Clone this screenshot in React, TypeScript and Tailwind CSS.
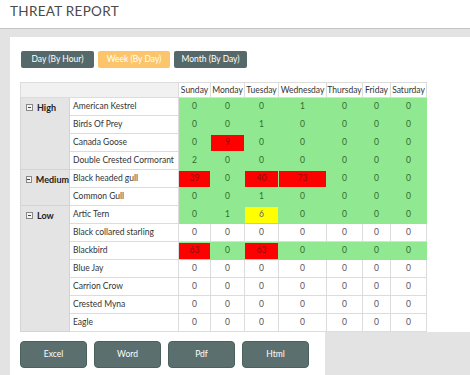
import React from 'react';

type Cell = { v: number; c?: 'g' | 'r' | 'y' | 'w' };

const days = ['Sunday', 'Monday', 'Tuesday', 'Wednesday', 'Thursday', 'Friday', 'Saturday'];

const g = (vals: number[], red: number[] = [], yellow: number[] = []): Cell[] =>
  vals.map((v, i) => ({ v, c: red.includes(i) ? 'r' : yellow.includes(i) ? 'y' : 'g' }));
const w = (vals: number[]): Cell[] => vals.map((v) => ({ v, c: 'w' }));

const groups: { level: string; rows: { bird: string; cells: Cell[] }[] }[] = [
  {
    level: 'High',
    rows: [
      { bird: 'American Kestrel', cells: g([0, 0, 0, 1, 0, 0, 0]) },
      { bird: 'Birds Of Prey', cells: g([0, 0, 1, 0, 0, 0, 0]) },
      { bird: 'Canada Goose', cells: g([0, 9, 0, 0, 0, 0, 0], [1]) },
      { bird: 'Double Crested Cormorant', cells: g([2, 0, 0, 0, 0, 0, 0]) },
    ],
  },
  {
    level: 'Medium',
    rows: [
      { bird: 'Black headed gull', cells: g([39, 0, 40, 73, 0, 0, 0], [0, 2, 3]) },
      { bird: 'Common Gull', cells: g([0, 0, 1, 0, 0, 0, 0]) },
    ],
  },
  {
    level: 'Low',
    rows: [
      { bird: 'Artic Tern', cells: g([0, 1, 6, 0, 0, 0, 0], [], [2]) },
      { bird: 'Black collared starling', cells: w([0, 0, 0, 0, 0, 0, 0]) },
      { bird: 'Blackbird', cells: g([63, 0, 63, 0, 0, 0, 0], [0, 2]) },
      { bird: 'Blue Jay', cells: w([0, 0, 0, 0, 0, 0, 0]) },
      { bird: 'Carrion Crow', cells: w([0, 0, 0, 0, 0, 0, 0]) },
      { bird: 'Crested Myna', cells: w([0, 0, 0, 0, 0, 0, 0]) },
      { bird: 'Eagle', cells: w([0, 0, 0, 0, 0, 0, 0]) },
    ],
  },
];

function ValueCell({ cell }: { cell: Cell }) {
  if (cell.c === 'w') {
    return <td className="border border-[#dcdcdc] bg-white text-center text-[#555]">{cell.v}</td>;
  }
  const inner =
    cell.c === 'r'
      ? 'bg-[#ff0000] text-[#8a1010]'
      : cell.c === 'y'
      ? 'bg-[#ffff00] text-[#666]'
      : 'text-[#2c6e2c]';
  return (
    <td className="border border-[#90e890] bg-[#90e890] p-0 text-center">
      <div className={`flex h-[16px] items-center justify-center ${inner}`}>{cell.v}</div>
    </td>
  );
}

function MinusBox() {
  return (
    <span className="mr-[4px] inline-flex h-[7px] w-[7px] items-center justify-center border border-[#888] bg-[#f4f4f4]">
      <span className="h-px w-[3px] bg-[#444]" />
    </span>
  );
}

export default function App() {
  return (
    <div className="h-[375px] w-[470px] overflow-hidden bg-[#e3e3e3] font-['Lato',sans-serif]">
      <div className="h-[29px] border-b border-[#c4c4c4] bg-white pl-[10px] pt-[3px]">
        <h1 className="text-[13.5px] leading-[16px] tracking-[0.3px] text-[#4a4a4a]">THREAT REPORT</h1>
      </div>
      <div className="ml-[10px] mt-[8px]">
        <div className="bg-white pl-[10px] pt-[14px]">
          <div className="flex gap-[4px] pl-[1px]">
            <button className="h-[17px] w-[73px] rounded-[2px] bg-[#56696a] text-[8.5px] text-white">Day (By Hour)</button>
            <button className="h-[17px] w-[72px] rounded-[2px] bg-[#fcc56c] text-[8.5px] text-white">Week (By Day)</button>
            <button className="h-[17px] w-[73px] rounded-[2px] bg-[#56696a] text-[8.5px] text-white">Month (By Day)</button>
          </div>
          <table className="mt-[14px] w-[406px] table-fixed border-collapse text-[8.5px]">
            <colgroup>
              <col className="w-[49px]" />
              <col className="w-[109px]" />
              <col className="w-[32px]" />
              <col className="w-[34px]" />
              <col className="w-[34px]" />
              <col className="w-[48px]" />
              <col className="w-[36px]" />
              <col className="w-[28px]" />
              <col className="w-[36px]" />
            </colgroup>
            <thead>
              <tr className="h-[15px]">
                <th colSpan={2} className="border border-[#dcdcdc] bg-[#f1f1f1]" />
                {days.map((d) => (
                  <th key={d} className="border border-[#dcdcdc] bg-white px-0 text-center font-normal text-[#333]">
                    {d}
                  </th>
                ))}
              </tr>
            </thead>
            <tbody>
              {groups.map((grp) =>
                grp.rows.map((row, i) => (
                  <tr key={row.bird} className="h-[18px]">
                    {i === 0 && (
                      <td
                        rowSpan={grp.rows.length}
                        className="border border-[#d4d4d4] bg-[#e4e4e4] pl-[5px] pt-[3px] align-top"
                      >
                        <div className="flex items-center text-[9px] font-bold text-[#222]">
                          <MinusBox />
                          {grp.level}
                        </div>
                      </td>
                    )}
                    <td className="whitespace-nowrap border border-[#dcdcdc] bg-white pl-[3px] text-[#333]">{row.bird}</td>
                    {row.cells.map((c, j) => (
                      <ValueCell key={j} cell={c} />
                    ))}
                  </tr>
                ))
              )}
            </tbody>
          </table>
        </div>
        <div className="flex">
          <div className="flex h-[50px] w-[315px] gap-[7px] bg-white pl-[10px] pt-[9px]">
            {['Excel', 'Word', 'Pdf', 'Html'].map((b) => (
              <button
                key={b}
                className="h-[27px] w-[67px] rounded-[4px] border border-[#4c605e] bg-[#5b706e] text-[8.5px] text-white"
              >
                {b}
              </button>
            ))}
          </div>
        </div>
      </div>
    </div>
  );
}
